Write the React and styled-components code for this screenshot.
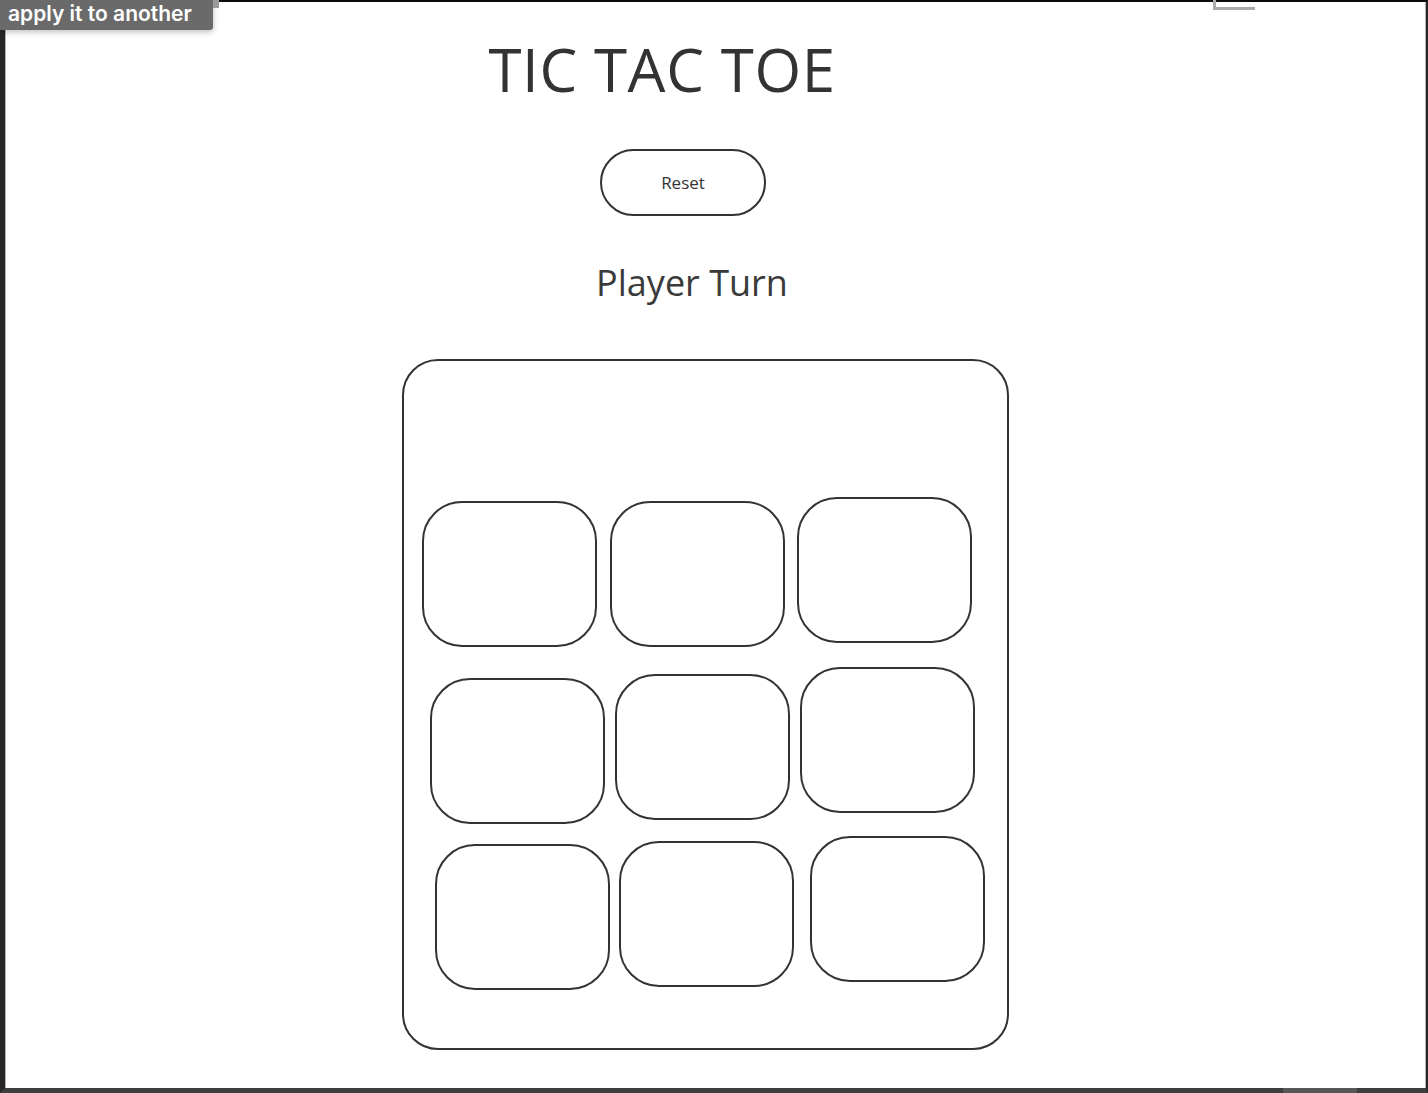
import React from 'react'
import styled, { createGlobalStyle } from 'styled-components'

// Board jitter, as drawn in the sketch
const cells = [
  { dx: 0, dy: 2 },
  { dx: 1, dy: 2 },
  { dx: 1, dy: -2 },
  { dx: 8, dy: 9 },
  { dx: 6, dy: 5 },
  { dx: 4, dy: -2 },
  { dx: 13, dy: 5 },
  { dx: 10, dy: 2 },
  { dx: 14, dy: -3 },
]

export default function App() {
  return (
    <>
      <GlobalStyle />
      <Frame>
        <Main>
          <Title>TIC TAC TOE</Title>
          <ResetButton>Reset</ResetButton>
          <Status>Player Turn</Status>
          <Board>
            <Grid>
              {cells.map((c, i) => (
                <Cell key={i} $dx={c.dx} $dy={c.dy} />
              ))}
            </Grid>
          </Board>
        </Main>
        <ScrollThumb />
        <Tooltip>apply it to another</Tooltip>
        <TooltipTail />
        <Bracket />
      </Frame>
    </>
  )
}

const GlobalStyle = createGlobalStyle`
  html, body {
    margin: 0;
    padding: 0;
    background: #fff;
    overflow: hidden;
  }
  body {
    font-family: "Open Sans", "Noto Sans", sans-serif;
    color: #333;
  }
`

const Frame = styled.div`
  position: relative;
  box-sizing: border-box;
  width: 1428px;
  height: 1093px;
  border-top: 2px solid #0b0b0b;
  border-left: 5px solid #262626;
  border-right: 2px solid #262626;
  border-bottom: 5px solid #3e3e3e;
  box-shadow: inset 1px 0 0 #b5b5b5, inset -1px 0 0 #b5b5b5;
  background: #fff;
`

const Main = styled.main`
  display: flex;
  flex-direction: column;
  align-items: center;
  padding-left: 290px;
  width: 820px;
`

const Title = styled.h1`
  margin: 37px 86px 0 0;
  font-size: 60px;
  line-height: 60px;
  font-weight: 400;
  color: #333;
  letter-spacing: 0.6px;
`

const ResetButton = styled.button`
  margin: 50px 44px 0 0;
  box-sizing: border-box;
  width: 166px;
  height: 67px;
  border: 2px solid #333;
  border-radius: 34px;
  background: #fff;
  font-family: "Open Sans", sans-serif;
  font-size: 17px;
  color: #333;
  cursor: pointer;
`

const Status = styled.h2`
  margin: 49px 26px 0 0;
  font-size: 36px;
  line-height: 36px;
  font-weight: 400;
  color: #3a3a3a;
`

const Board = styled.div`
  margin-top: 58px;
  box-sizing: border-box;
  width: 607px;
  height: 691px;
  border: 2px solid #333;
  border-radius: 36px;
  padding: 138px 0 0 18px;
`

const Grid = styled.div`
  display: grid;
  grid-template-columns: repeat(3, 175px);
  grid-template-rows: repeat(3, 146px);
  column-gap: 12px;
  row-gap: 24px;
`

const Cell = styled.div`
  box-sizing: border-box;
  border: 2px solid #333;
  border-radius: 40px;
  transform: translate(${(p) => p.$dx}px, ${(p) => p.$dy}px);
`

const ScrollThumb = styled.div`
  position: absolute;
  left: 1278px;
  bottom: -5px;
  width: 74px;
  height: 5px;
  background: #575757;
`

const Tooltip = styled.div`
  position: absolute;
  top: -2px;
  left: -5px;
  box-sizing: border-box;
  width: 213px;
  height: 30px;
  padding: 0 0 3px 8px;
  display: flex;
  align-items: center;
  background: #6a6a6a;
  border-radius: 0 0 3px 0;
  box-shadow: 0 2px 6px rgba(0, 0, 0, 0.25);
  font-family: Inter, "Liberation Sans", sans-serif;
  font-size: 21px;
  font-weight: 600;
  color: #fff;
  white-space: nowrap;
`

const TooltipTail = styled.div`
  position: absolute;
  top: -2px;
  left: 208px;
  width: 6px;
  height: 8px;
  background: #9a9a9a;
`

const Bracket = styled.div`
  position: absolute;
  top: -2px;
  left: 1208px;
  width: 39px;
  height: 7px;
  border-left: 3px solid #aaa;
  border-bottom: 3px solid #aaa;
`
